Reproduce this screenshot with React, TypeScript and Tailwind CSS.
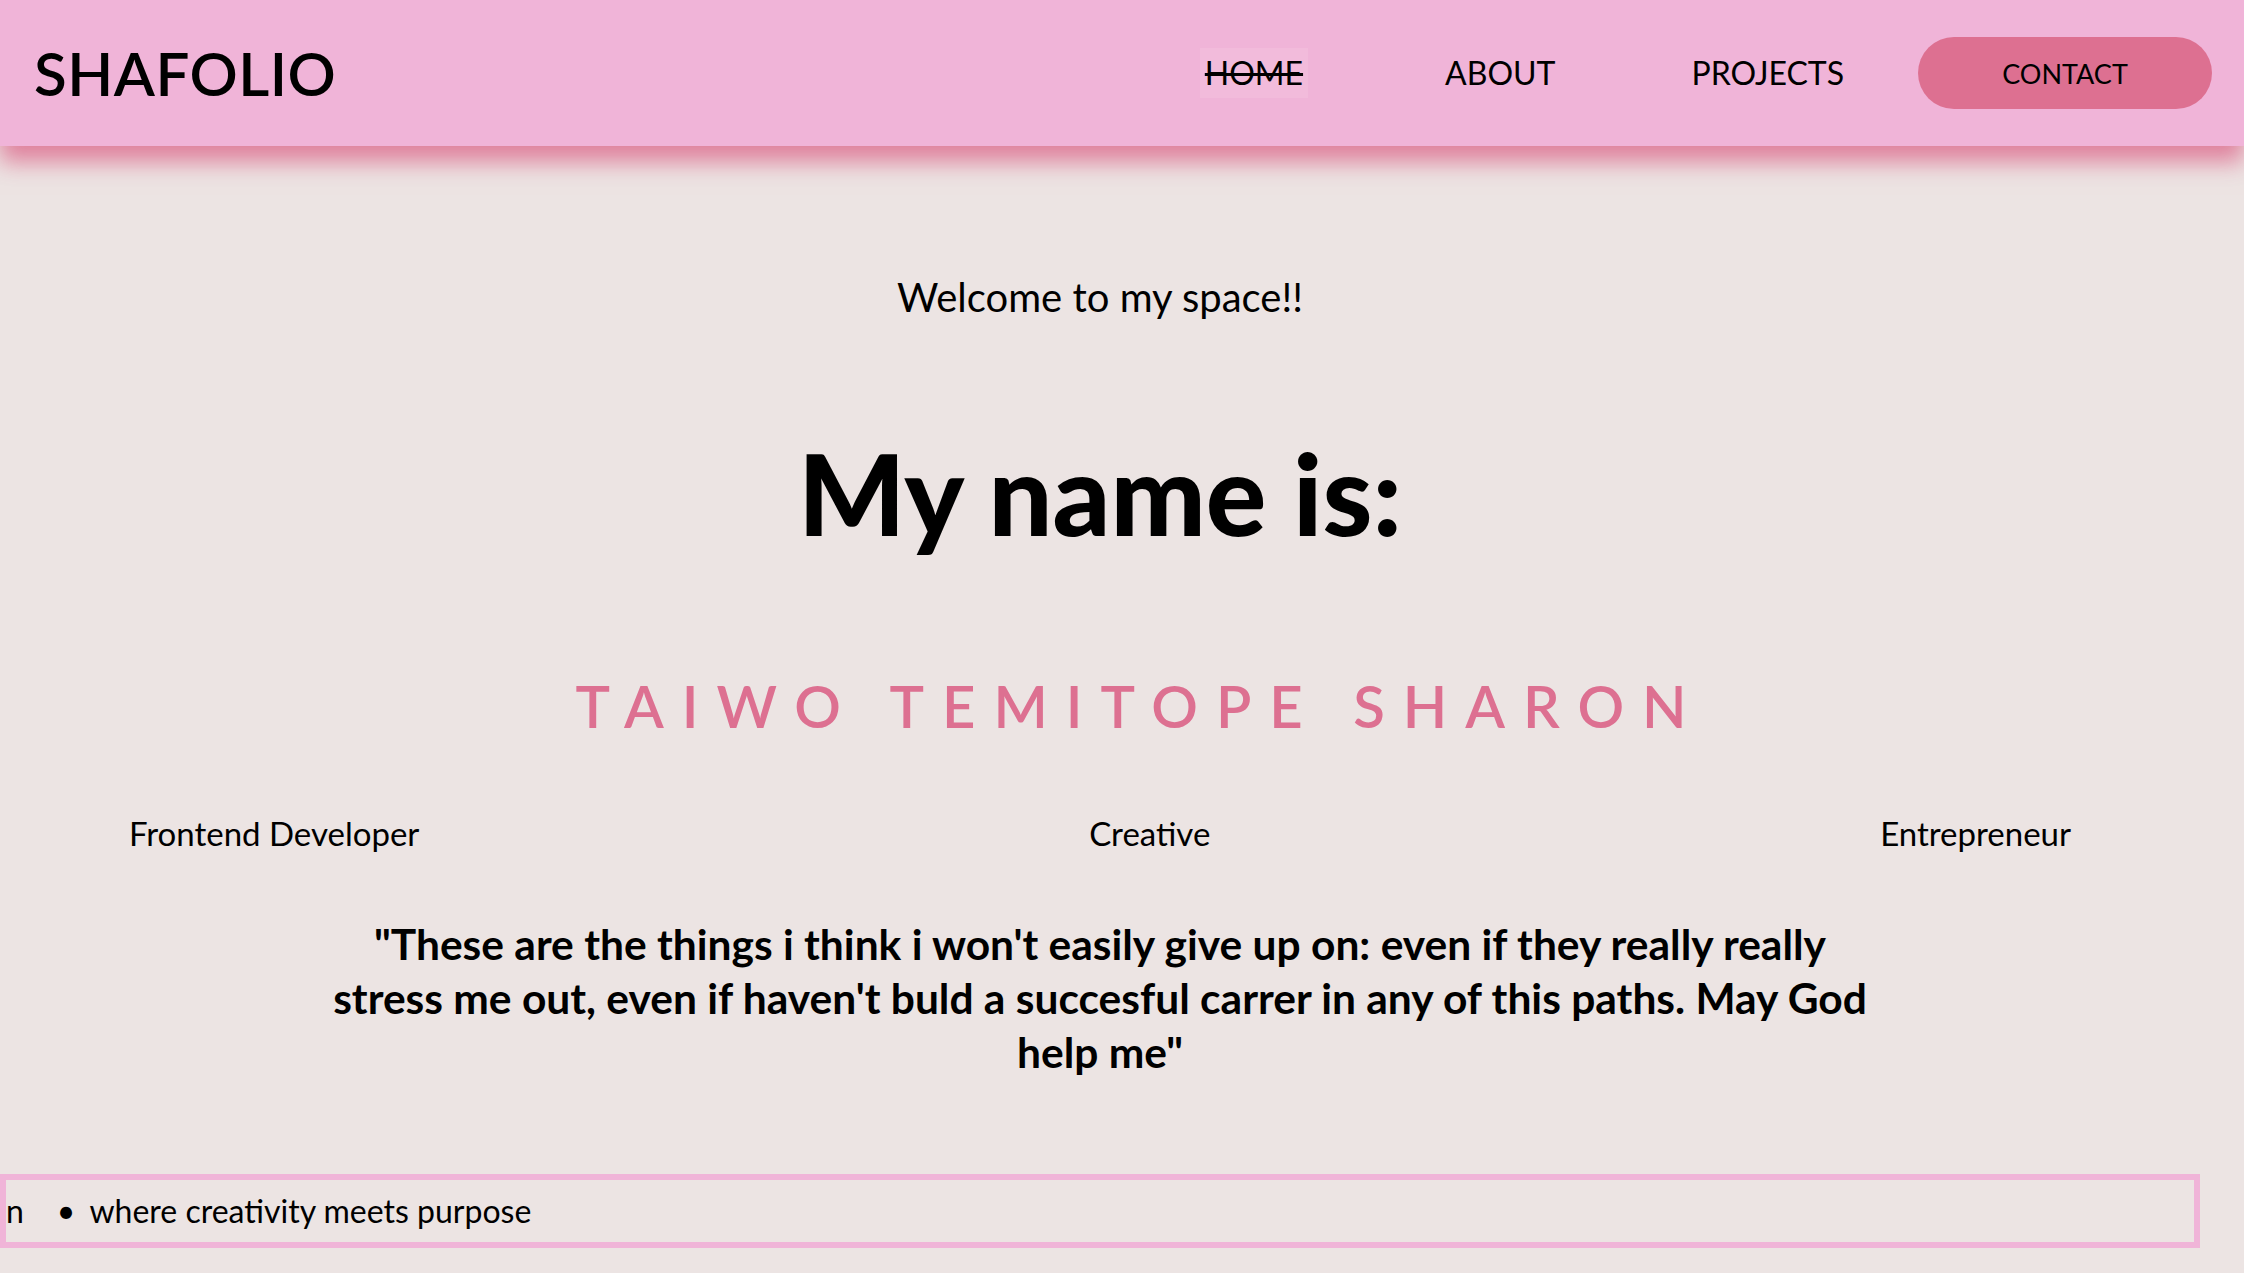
import React from "react";

const roles = ["Frontend Developer", "Creative", "Entrepreneur"];

export default function App() {
  return (
    <div className="min-h-screen w-full bg-[#ece4e3] font-['Lato',sans-serif] text-black">
      {/* header */}
      <header className="relative z-10 flex h-[146px] w-full items-center justify-between bg-[#f0b4d8] pl-[34px] pr-[32px] shadow-[0_16px_22px_rgba(221,112,145,0.85)]">
        <div className="text-[60px] font-semibold leading-none tracking-[0.5px]">SHAFOLIO</div>
        <nav className="flex items-center">
          <a href="#" className="bg-[#f2bbdb] px-[5px] py-[9px] text-[32px] leading-none line-through decoration-[3px]">
            HOME
          </a>
          <a href="#" className="ml-[137px] text-[32px] leading-none">
            ABOUT
          </a>
          <a href="#" className="ml-[136px] text-[32px] leading-none">
            PROJECTS
          </a>
          <a
            href="#"
            className="ml-[74px] flex h-[72px] w-[294px] items-center justify-center rounded-full bg-[#dd7091] text-[27px] leading-none"
          >
            CONTACT
          </a>
        </nav>
      </header>

      {/* main */}
      <main className="flex w-[2200px] flex-col items-center pb-[23px] pt-[131px]">
        <p className="text-[40px] leading-none">Welcome to my space!!</p>
        <h1 className="mt-[119px] text-[113px] font-black leading-none">My name is:</h1>
        <h2 className="mt-[128px] pl-[80px] text-[58px] font-semibold leading-none tracking-[0.31em] text-[#dd7091]">
          TAIWO TEMITOPE SHARON
        </h2>

        <div className="mt-[82px] flex w-full justify-between px-[129px]">
          {roles.map((r) => (
            <span key={r} className="text-[33px] leading-none">
              {r}
            </span>
          ))}
        </div>

        <p className="mt-[67px] w-[1550px] text-center text-[42.5px] font-bold leading-[54px]">
          "These are the things i think i won't easily give up on: even if they really really stress me out, even if
          haven't buld a succesful carrer in any of this paths. May God help me"
        </p>

        {/* ticker */}
        <div className="mt-[95px] flex h-[74px] w-full items-center overflow-hidden border-[6px] border-[#f0b4d8]">
          <div className="flex items-center whitespace-nowrap text-[32px] leading-none">
            <span>n</span>
            <span className="ml-[33px] mr-[14px]">•</span>
            <span>where creativity meets purpose</span>
          </div>
        </div>
      </main>
    </div>
  );
}
